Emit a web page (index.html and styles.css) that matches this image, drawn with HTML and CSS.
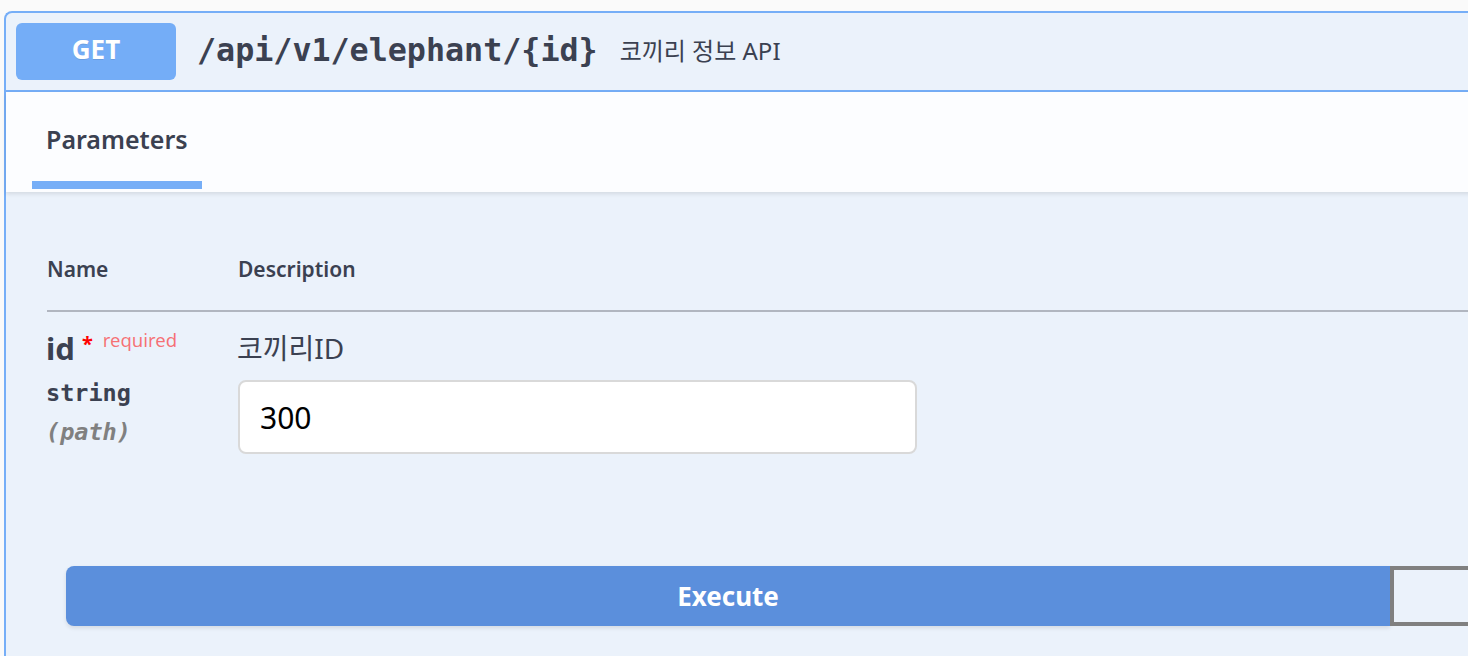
FILE: index.html
```html
<!DOCTYPE html>
<html lang="ko">
<head>
<meta charset="utf-8">
<title>Swagger</title>
<link rel="stylesheet" href="styles.css">
</head>
<body>
<div class="opblock">
  <div class="summary">
    <span class="method">GET</span>
    <span class="path">/api/v1/elephant/{id}</span>
    <span class="summary-desc">코끼리 정보 API</span>
  </div>
  <div class="tab-header">
    <div class="tab">Parameters</div>
  </div>
  <div class="body">
    <div class="params-head">
      <div class="col-name">Name</div>
      <div class="col-desc">Description</div>
    </div>
    <div class="param-row">
      <div class="col-name">
        <div class="param-name">id<span class="star">*</span><span class="req">required</span></div>
        <div class="param-type">string</div>
        <div class="param-in">(path)</div>
      </div>
      <div class="col-desc">
        <div class="param-desc">코끼리ID</div>
        <input class="param-input" type="text" value="300">
      </div>
    </div>
    <div class="btn-group">
      <button class="btn execute">Execute</button>
      <button class="btn clear"></button>
    </div>
  </div>
</div>
</body>
</html>
```

FILE: styles.css
```css
html, body {
  margin: 0;
  padding: 0;
  overflow: hidden;
  height: 656px;
  background: #fafafa;
  font-family: "Noto Sans", "Noto Sans CJK KR", sans-serif;
  color: #3b4151;
}

.opblock {
  margin: 11px 0 0 4px;
  width: 1600px;
  border: 2px solid #76aef7;
  border-right: none;
  border-bottom: none;
  border-top-left-radius: 8px;
  background: #ebf2fb;
  height: 700px;
}

.summary {
  display: flex;
  align-items: center;
  padding: 10px 10px;
  height: 57px;
  border-bottom: 2px solid #76aef7;
}

.method {
  width: 160px;
  height: 57px;
  border-radius: 6px;
  background: #74adf7;
  color: #fff;
  font-weight: 700;
  font-size: 26px;
  line-height: 1;
  display: flex;
  align-items: center;
  justify-content: center;
  padding-bottom: 5px;
  box-sizing: border-box;
  text-shadow: 0 1px 0 rgba(0,0,0,.1);
}

.path {
  margin-left: 21px;
  font-family: "DejaVu Sans Mono", monospace;
  font-weight: 700;
  font-size: 31.7px;
  color: #3b4151;
  position: relative;
  top: -2px;
}

.summary-desc {
  margin-left: 22px;
  font-size: 24px;
  color: #3b4151;
  position: relative;
  top: -2px;
}

.tab-header {
  height: 100px;
  background: #fcfdff;
  box-shadow: 0 2px 4px rgba(0,0,0,.1);
  padding-left: 26px;
  display: flex;
  align-items: flex-end;
  position: relative;
}

.tab {
  width: 170px;
  font-size: 25px;
  font-weight: 600;
  padding: 0 0 29px 14px;
  box-sizing: border-box;
  border-bottom: 8px solid #76aef7;
  margin-bottom: 3px;
  line-height: 1;
}

.body {
  padding: 0 0 0 40px;
}

.params-head {
  display: flex;
  padding-top: 63px;
  height: 55px;
  border-bottom: 2px solid #b1b6c0;
  font-size: 21px;
  font-weight: 600;
  align-items: flex-start;
  line-height: 28px;
  margin-left: 1px;
}

.params-head .col-name {
  width: 191px;
  padding-left: 0;
}

.col-name {
  width: 192px;
}

.col-desc {
  flex: 0 0 auto;
}

.param-row {
  display: flex;
  padding-top: 16px;
}

.param-name {
  font-size: 31px;
  font-weight: 700;
  line-height: 40px;
  display: flex;
  align-items: flex-start;
}

.star {
  color: #f00;
  font-size: 20px;
  margin-left: 7px;
  line-height: 28px;
  position: relative;
  top: 2px;
}

.req {
  color: rgba(255,0,0,.55);
  font-size: 18.5px;
  font-weight: 400;
  margin-left: 10px;
  line-height: 24px;
  position: relative;
  top: 0px;
}

.param-type {
  font-family: "DejaVu Sans Mono", monospace;
  font-size: 23.5px;
  font-weight: 700;
  line-height: 30px;
  margin-top: 10px;
}

.param-in {
  font-family: "DejaVu Sans Mono", monospace;
  font-size: 23.5px;
  font-weight: 700;
  font-style: italic;
  color: #808080;
  line-height: 30px;
  margin-top: 9px;
}

.param-desc {
  font-size: 28px;
  line-height: 40px;
  color: #3b4151;
  margin-left: -1px;
}

.param-input {
  display: block;
  margin-top: 12px;
  width: 679px;
  height: 74px;
  box-sizing: border-box;
  border: 2px solid #d9d9d9;
  border-radius: 8px;
  background: #fff;
  padding: 0 20px;
  font-family: "Noto Sans", sans-serif;
  font-size: 30px;
  color: #000;
  outline: none;
}

.btn-group {
  display: flex;
  margin-top: 112px;
  margin-left: 20px;
}

.btn {
  flex-shrink: 0;
  height: 60px;
  box-sizing: border-box;
  font-family: "Noto Sans", sans-serif;
  font-weight: 700;
  font-size: 26px;
  cursor: pointer;
}

.execute {
  width: 1324px;
  border: none;
  background: #5b8fdc;
  color: #fff;
  border-radius: 8px 0 0 8px;
  box-shadow: 0 2px 4px rgba(0,0,0,.1);
}

.clear {
  width: 300px;
  border: 4px solid #808080;
  background: transparent;
  border-radius: 0 8px 8px 0;
}
```
